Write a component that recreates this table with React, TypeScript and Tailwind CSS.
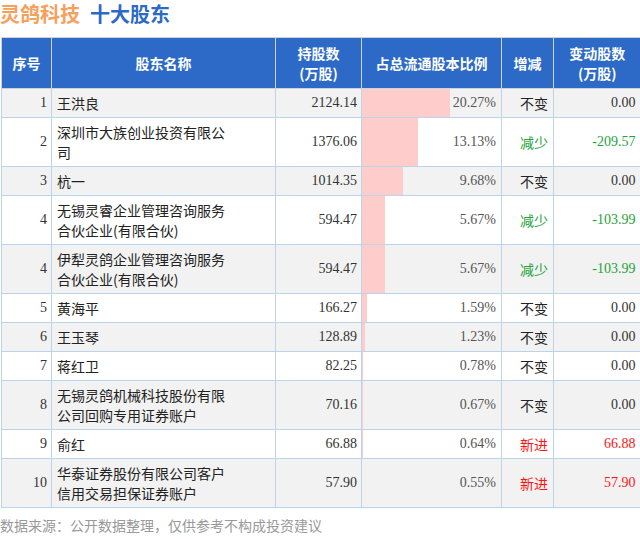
import React from "react";

type Row = {
  no: string;
  name: string;
  shares: string;
  pct: number;
  change: "不变" | "减少" | "新进";
  delta: string;
};

const rows: Row[] = [
  { no: "1", name: "王洪良", shares: "2124.14", pct: 20.27, change: "不变", delta: "0.00" },
  { no: "2", name: "深圳市大族创业投资有限公司", shares: "1376.06", pct: 13.13, change: "减少", delta: "-209.57" },
  { no: "3", name: "杭一", shares: "1014.35", pct: 9.68, change: "不变", delta: "0.00" },
  { no: "4", name: "无锡灵睿企业管理咨询服务合伙企业(有限合伙)", shares: "594.47", pct: 5.67, change: "减少", delta: "-103.99" },
  { no: "4", name: "伊犁灵鸽企业管理咨询服务合伙企业(有限合伙)", shares: "594.47", pct: 5.67, change: "减少", delta: "-103.99" },
  { no: "5", name: "黄海平", shares: "166.27", pct: 1.59, change: "不变", delta: "0.00" },
  { no: "6", name: "王玉琴", shares: "128.89", pct: 1.23, change: "不变", delta: "0.00" },
  { no: "7", name: "蒋红卫", shares: "82.25", pct: 0.78, change: "不变", delta: "0.00" },
  { no: "8", name: "无锡灵鸽机械科技股份有限公司回购专用证券账户", shares: "70.16", pct: 0.67, change: "不变", delta: "0.00" },
  { no: "9", name: "俞红", shares: "66.88", pct: 0.64, change: "新进", delta: "66.88" },
  { no: "10", name: "华泰证券股份有限公司客户信用交易担保证券账户", shares: "57.90", pct: 0.55, change: "新进", delta: "57.90" },
];

const changeColor = {
  不变: "text-[#222]",
  减少: "text-[#1ea33a]",
  新进: "text-[#ff1414]",
};

const deltaColor = {
  不变: "text-[#333]",
  减少: "text-[#1ea33a]",
  新进: "text-[#ff1414]",
};

function barWidth(pct: number) {
  return Math.max(0, Math.round((pct - 0.5) * 4.45));
}

export default function App() {
  return (
    <div className="relative h-[539px] w-[640px] overflow-hidden bg-white font-['Noto_Sans_CJK_SC',sans-serif]">
      <div className="flex h-[37px] items-start gap-[10px] text-[20px] font-bold leading-[28px]">
        <span className="text-[#f6a05c]">灵鸽科技</span>
        <span className="text-[#2c6ac6]">十大股东</span>
      </div>

      <table className="ml-px w-[639px] table-fixed border-collapse text-[14px] leading-[20px]">
        <colgroup>
          <col className="w-[50px]" />
          <col className="w-[224px]" />
          <col className="w-[86px]" />
          <col className="w-[140px]" />
          <col className="w-[52px]" />
          <col className="w-[87px]" />
        </colgroup>
        <thead>
          <tr className="h-[51px] bg-[#2d6ac7] text-white">
            <th className="border border-[#c9d3df] font-bold">序号</th>
            <th className="border border-[#c9d3df] font-bold">股东名称</th>
            <th className="border border-[#c9d3df] font-bold">
              持股数
              <br />
              (万股)
            </th>
            <th className="border border-[#c9d3df] font-bold">占总流通股本比例</th>
            <th className="border border-[#c9d3df] font-bold">增减</th>
            <th className="border border-[#c9d3df] border-r-0 font-bold">
              变动股数
              <br />
              (万股)
            </th>
          </tr>
        </thead>
        <tbody>
          {rows.map((r, i) => (
            <tr key={i} className={i % 2 === 0 ? "bg-[#f2f2f2]" : "bg-white"}>
              <td className="border border-[#bcd3ea] py-[4px] pr-[4px] text-right font-['Liberation_Serif',serif] text-[#333]">
                {r.no}
              </td>
              <td className="border border-[#bcd3ea] py-[4px] pl-[5px] text-[#222]">
                <div className="w-[172px]">{r.name}</div>
              </td>
              <td className="border border-[#bcd3ea] py-[4px] pr-[4px] text-right font-['Liberation_Serif',serif] text-[#333]">
                {r.shares}
              </td>
              <td className="relative border border-[#bcd3ea] py-[4px] pr-[5px] text-right font-['Liberation_Serif',serif] text-[#555]">
                <div
                  className="absolute inset-y-0 left-0 bg-[#ffcccc]"
                  style={{ width: barWidth(r.pct) }}
                />
                <span className="relative">{r.pct.toFixed(2)}%</span>
              </td>
              <td className={`border border-[#bcd3ea] py-[4px] pr-[5px] text-right ${changeColor[r.change]}`}>
                {r.change}
              </td>
              <td
                className={`border border-[#bcd3ea] border-r-0 py-[4px] pr-[5px] text-right font-['Liberation_Serif',serif] ${deltaColor[r.change]}`}
              >
                {r.delta}
              </td>
            </tr>
          ))}
        </tbody>
      </table>

      <p className="mt-[7px] text-[14px] leading-[20px] text-[#999]">数据来源：公开数据整理，仅供参考不构成投资建议</p>
    </div>
  );
}
